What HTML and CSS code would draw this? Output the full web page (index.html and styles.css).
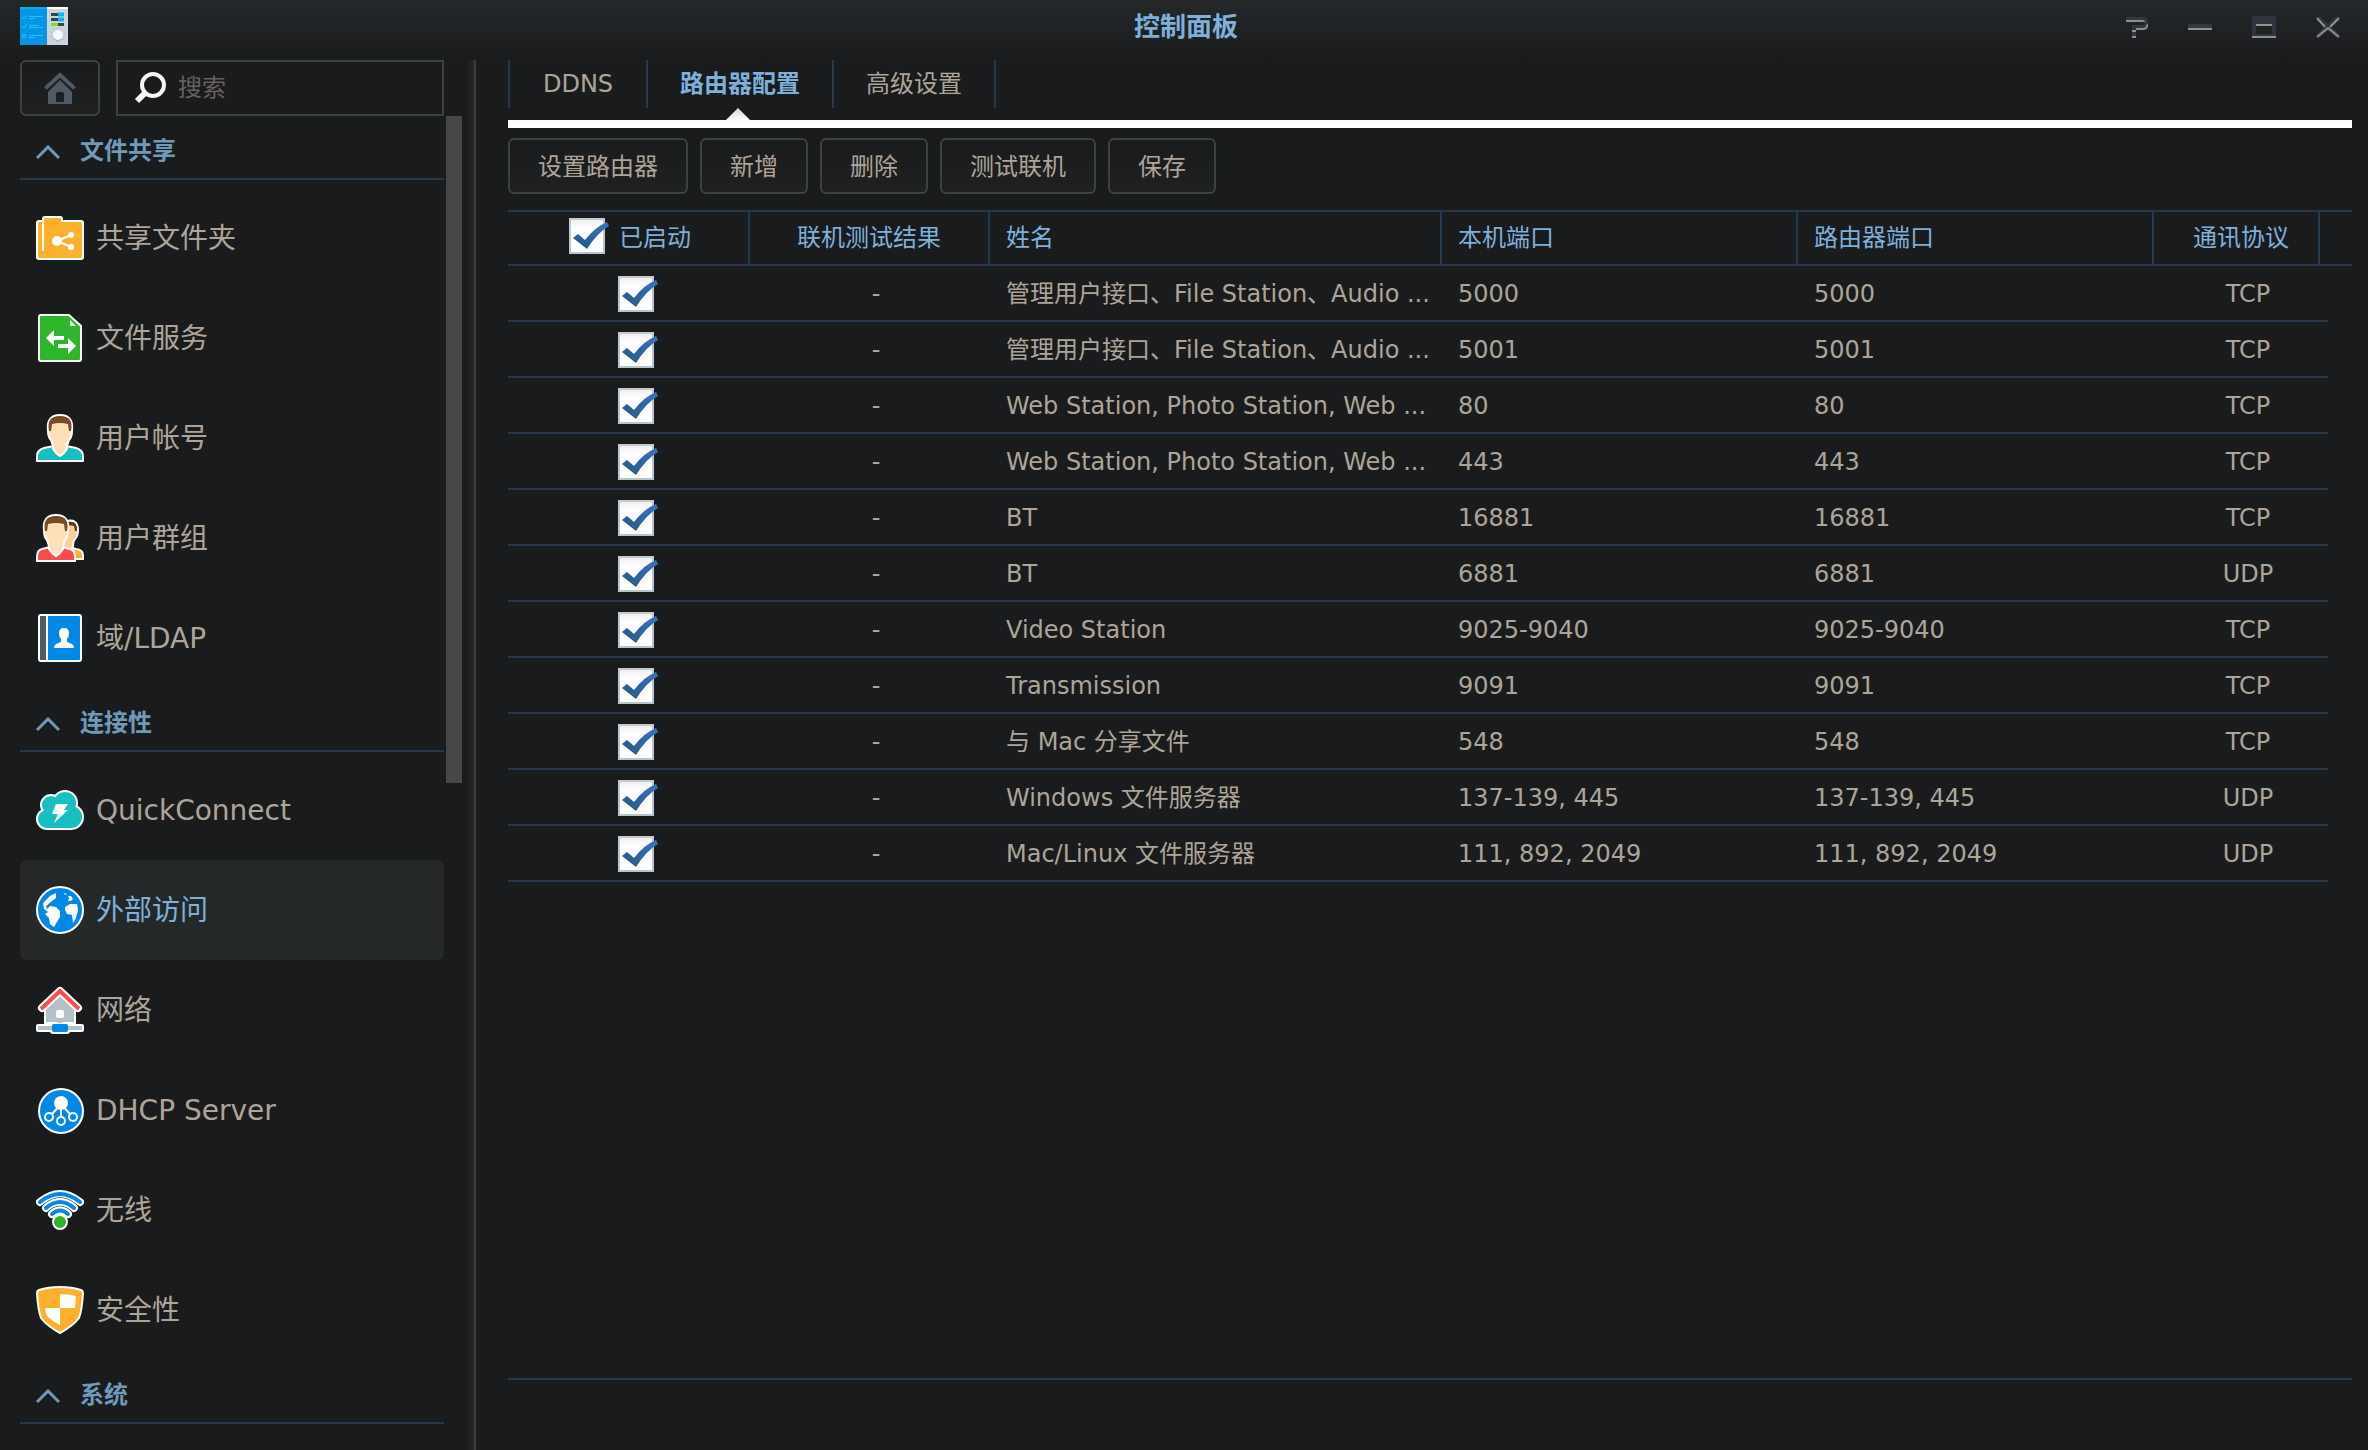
FILE: index.html
```html
<!DOCTYPE html>
<html lang="zh-CN">
<head>
<meta charset="utf-8">
<title>控制面板</title>
<link rel="stylesheet" href="styles.css">
</head>
<body>
<div class="window">
  <header class="titlebar">
    <svg class="app-icon" viewBox="0 0 48 38" aria-hidden="true">
      <path fill="#0795e4" d="M0 0h27v38H0z"/><path fill="#00aef5" d="M0 0h27v2H0z"/>
      <path fill="#ccd5dc" d="M27 0h21v38H27z"/><path fill="#fff" d="M27 0h21v2H27z"/>
      <g fill="none" stroke="#14c8ff"><path d="M2 10l2 2 3-4M2 19l2 2 3-4M2.500 27.500h3v3h-3z"/><path d="M9 9.500h14M9 11.500h6M9 18.500h10M9 20.500h14M9 28.500h14M9 30.500h6"/></g>
      <path stroke="#39434c" stroke-width="3" d="M31 7.500h8M31 12.500h8M38 17.500h6"/>
      <path stroke="#00b9fa" stroke-width="4" d="M38 7.500h6M38 12.500h6"/><path stroke="#7be02b" stroke-width="3" d="M31 17.500h7"/>
      <circle cx="38" cy="28" r="7" fill="none" stroke="#9ba6ae" stroke-dasharray="1 3"/><circle cx="38" cy="29" r="5" fill="#a5b0b8"/><circle cx="38" cy="28" r="5" fill="#f3f9fd"/>
    </svg>
    <h1 class="title">控制面板</h1>
    <div class="controls">
      <button class="control" aria-label="帮助"><svg viewBox="0 0 24 24"><path fill="none" stroke="#33383f" stroke-width="4" d="M2 3h17q3 0 3 4t-3 4h-9v10"/><path fill="none" stroke="#8e9092" stroke-width="2" d="M2 5h16q2 0 2 1M24 8q-1 5-5 5h-7M8 15h4M8 21h4"/></svg></button>
      <button class="control" aria-label="最小化"><svg viewBox="0 0 24 24"><path fill="#33383f" d="M0 8h24v4H0z"/><path fill="#8e9092" d="M0 12h24v2H0z"/></svg></button>
      <button class="control" aria-label="最大化"><svg viewBox="0 0 24 24"><path fill="#30353d" fill-rule="evenodd" d="M0 0h24v20H0zM4 10v8h16v-8z"/><path fill="#8e9092" d="M4 8h16v2H4zM0 20h24v2H0z"/></svg></button>
      <button class="control" aria-label="关闭"><svg viewBox="0 0 24 24"><path stroke="#30353d" stroke-width="5" d="M2 2l20 18M22 2L2 20"/><path fill="none" stroke="#8e9092" stroke-width="2" d="M1 2l8 9M23 2l-9 9M1 21l11-9 11 9"/></svg></button>
    </div>
  </header>

  <div class="body">
    <aside class="sidebar">
      <div class="search-row">
        <button class="home" aria-label="首页"><svg viewBox="0 0 32 32"><path fill="none" stroke="#505a64" stroke-width="4" stroke-linecap="square" d="M3 15L16 3l13 12"/><path fill="#505a64" fill-rule="evenodd" d="M16 8l12 12v12H4V20zM12 30h8v-8q0-2-2-2h-4q-2 0-2 2z"/></svg></button>
        <label class="search">
          <svg viewBox="0 0 32 32" aria-hidden="true"><circle cx="19" cy="13" r="11" fill="none" stroke="#f5f5f5" stroke-width="4"/><path stroke="#f5f5f5" stroke-width="6" d="M11 21l-8 8"/></svg>
          <input type="text" placeholder="搜索" aria-label="搜索">
        </label>
      </div>
      <nav class="nav">
        <div class="nav-list">
          <button class="group"><svg viewBox="0 0 24 14" aria-hidden="true"><path d="M1 13L12 2l11 11"/></svg>文件共享</button>
          <div class="items">
            <a class="item" href="#share"><svg viewBox="0 0 48 48"><path fill="#ffb02e" stroke="#fff" stroke-width="2" d="M1 9q0-2 2-2h4V5q0-2 2-2h15q2 0 2 2v2h19q2 0 2 2v34q0 2-2 2H3q-2 0-2-2z"/><path stroke="#fff" stroke-width="2" d="M7 7v30M21 27l14-6M21 27l14 6"/><g fill="#fff"><circle cx="21" cy="27" r="5"/><circle cx="35" cy="21" r="3"/><circle cx="35" cy="33" r="3"/></g></svg>共享文件夹</a>
            <a class="item" href="#files"><svg viewBox="0 0 48 48"><path fill="#2fb52b" stroke="#fff" stroke-width="2" d="M3 3q0-2 2-2h28l12 11v33q0 2-2 2H5q-2 0-2-2z"/><path fill="#fff" d="M34 6v6h6zM10 24l8-8v6h10v4H18v6zM22 30h10v-6l8 8-8 8v-6H22z"/></svg>文件服务</a>
            <a class="item" href="#user"><svg viewBox="0 0 48 48"><path fill="#15bfc0" stroke="#fff" stroke-width="2" stroke-linejoin="round" d="M1 47v-5q0-6 7-8l10-2h12l10 2q7 2 7 8v5z"/><path fill="#ffdfb8" stroke="#fff" stroke-width="2" d="M12 17q-2-16 12-16t12 16q0 6-3 9-2 4-2 9-3 5-7 7-4-2-7-7 0-5-2-9-3-3-3-9z"/><path fill="#754b28" d="M13 17q-3-15 11-15t11 15h-2l-1-7q-8-2-16 0l-1 7z"/></svg>用户帐号</a>
            <a class="item" href="#group"><svg viewBox="0 0 48 48"><path fill="#ffb02e" stroke="#fff" stroke-width="2" d="M30 45h17v-4q0-5-7-6l-9-2z"/><path fill="#fdcf98" stroke="#fff" stroke-width="2" d="M28 8q14-5 14 8 0 6-3 9-2 2-2 8l-6 4-8-9z"/><path fill="#5d3b1e" d="M31 8q11-2 10 9h-2l-1-5-6-1z"/><path fill="#ff4a4e" stroke="#fff" stroke-width="2" stroke-linejoin="round" d="M1 47v-4q0-7 5-8l8-2h12l8 2q5 1 5 8v4z"/><path fill="#ffdfb8" stroke="#fff" stroke-width="2" d="M8 17Q6 1 20 1t12 16q0 6-3 9-2 4-2 9-3 5-7 7-4-2-7-7 0-5-2-9-3-3-3-9z"/><path fill="#754b28" d="M9 17Q6 2 20 2t11 15h-2l-1-7q-8-2-16 0l-1 7z"/></svg>用户群组</a>
            <a class="item" href="#ldap"><svg viewBox="0 0 48 48"><rect x="3" y="1" width="42" height="46" rx="2" fill="#0088e6" stroke="#fff" stroke-width="2"/><path fill="#505a62" d="M4 2h6v44H4z"/><path fill="#fff" d="M10 2h2v44h-2zM23 19q0-5 5-5t5 5q0 4-2 6v3l5 2q2 1 2 4H18q0-3 2-4l5-2v-3q-2-2-2-6z"/></svg>域/LDAP</a>
          </div>
          <button class="group"><svg viewBox="0 0 24 14" aria-hidden="true"><path d="M1 13L12 2l11 11"/></svg>连接性</button>
          <div class="items">
            <a class="item" href="#quickconnect"><svg viewBox="0 0 48 48"><g fill="#fff"><circle cx="29" cy="17" r="13"/><circle cx="15" cy="19" r="11"/><circle cx="11" cy="33" r="11"/><circle cx="35" cy="31" r="13"/><path d="M11 20h24v24H11z"/></g><g fill="#17bfc0"><circle cx="29" cy="17" r="11"/><circle cx="15" cy="19" r="9"/><circle cx="11" cy="33" r="9"/><circle cx="35" cy="31" r="11"/><path d="M11 18h24v24H11z"/></g><path fill="#fff" d="M20 18h12l-4 6h4L18 37l4-9h-6z"/></svg>QuickConnect</a>
            <a class="item active" href="#external" aria-current="page"><svg viewBox="0 0 48 48"><circle cx="24" cy="24" r="23" fill="#0088e6" stroke="#fff" stroke-width="2"/><path fill="#fff" d="M20 7l-6 3-7 7 1 6 4 3-3 2 4 4 1 6 4 3 3-5 3-5v-6l-4-4-6-1-3 3-1-3 6-5 4-3zM29 21l5-3 7 0 1 6-2 8-3 5-1-8-5-1-2-4zM28 7l3 1-2 1zM32 10h3l2 3-2 2h-3l1-3z"/></svg>外部访问</a>
            <a class="item" href="#network"><svg viewBox="0 0 48 48"><path fill="#b6c0c8" stroke="#fff" stroke-width="2" d="M9 22L24 8l15 14v15H9z"/><path fill="none" stroke="#fff" stroke-width="8" stroke-linejoin="round" stroke-linecap="round" d="M6 22L24 5l18 17"/><path fill="none" stroke="#ff4a4e" stroke-width="4" d="M5 23L24 5l19 18"/><rect x="20" y="24" width="8" height="8" rx="2" fill="#fff"/><path fill="#b6c0c8" d="M22 36h4v3h-4z"/><rect y="38" width="48" height="8" rx="2" fill="#fff"/><rect x="14" y="37" width="20" height="11" rx="3" fill="#fff"/><path fill="#b6c0c8" d="M2 40h44v4H2z"/><rect x="16" y="38" width="16" height="8" rx="2" fill="#0088e6"/></svg>网络</a>
            <a class="item" href="#dhcp"><svg viewBox="0 0 48 48"><circle cx="25" cy="25" r="22" fill="#0088e6" stroke="#fff" stroke-width="2"/><path stroke="#fff" stroke-width="2" d="M25 17v14M25 18l-9 10M25 18l9 10"/><circle cx="25" cy="17" r="7" fill="#fff"/><g fill="#0088e6" stroke="#fff" stroke-width="2"><circle cx="13" cy="31" r="4"/><circle cx="25" cy="35" r="4"/><circle cx="37" cy="31" r="4"/></g></svg>DHCP Server</a>
            <a class="item" href="#wireless"><svg viewBox="0 0 48 48"><g fill="none" stroke-linecap="round"><path stroke="#fff" stroke-width="8" d="M4 16q20-16 40 0"/><path stroke="#0088e6" stroke-width="4" d="M4 16q20-16 40 0"/><path stroke="#1a1b1d" stroke-width="9" d="M10 22q14-12 28 0"/><path stroke="#fff" stroke-width="8" d="M10 22q14-12 28 0"/><path stroke="#0088e6" stroke-width="4" d="M10 22q14-12 28 0"/><path stroke="#1a1b1d" stroke-width="9" d="M16 28q8-7 16 0"/><path stroke="#fff" stroke-width="8" d="M16 28q8-7 16 0"/><path stroke="#0088e6" stroke-width="4" d="M16 28q8-7 16 0"/></g><circle cx="24" cy="36" r="7" fill="#2fb52b" stroke="#fff" stroke-width="2"/></svg>无线</a>
            <a class="item" href="#security"><svg viewBox="0 0 48 48"><path fill="#ffb02e" stroke="#fff" stroke-width="2" stroke-linejoin="round" d="M24 1q12 0 21 3 2 1 2 3-1 17-4 25-6 8-19 15Q11 40 5 32 2 24 1 7q0-2 2-3 9-3 21-3z"/><path fill="#fff" d="M24 8q8 0 16 2l-1 12H24zM9 22h15v17Q11 32 10 28z"/></svg>安全性</a>
          </div>
          <button class="group"><svg viewBox="0 0 24 14" aria-hidden="true"><path d="M1 13L12 2l11 11"/></svg>系统</button>
        </div>
        <div class="scroll-thumb"></div>
      </nav>
    </aside>

    <main class="content">
      <div class="tabs" role="tablist">
        <button class="tab" role="tab">DDNS</button>
        <button class="tab selected" role="tab" aria-selected="true">路由器配置</button>
        <button class="tab" role="tab">高级设置</button>
      </div>
      <div class="toolbar">
        <button class="btn">设置路由器</button>
        <button class="btn">新增</button>
        <button class="btn">删除</button>
        <button class="btn">测试联机</button>
        <button class="btn">保存</button>
      </div>
      <div class="grid">
        <table class="ports">
          <colgroup><col class="c-on"><col class="c-result"><col class="c-name"><col><col><col class="c-proto"><col class="c-rest"></colgroup>
          <thead>
            <tr><th class="mid"><label class="check-all"><input class="check" type="checkbox" checked>已启动</label></th><th class="mid">联机测试结果</th><th>姓名</th><th>本机端口</th><th>路由器端口</th><th class="proto">通讯协议</th><td></td></tr>
          </thead>
          <tbody>
            <tr><td class="on"><input class="check" type="checkbox" aria-label="启用" checked></td><td class="mid">-</td><td>管理用户接口、File Station、Audio ...</td><td>5000</td><td>5000</td><td class="proto">TCP</td><td></td></tr>
            <tr><td class="on"><input class="check" type="checkbox" aria-label="启用" checked></td><td class="mid">-</td><td>管理用户接口、File Station、Audio ...</td><td>5001</td><td>5001</td><td class="proto">TCP</td><td></td></tr>
            <tr><td class="on"><input class="check" type="checkbox" aria-label="启用" checked></td><td class="mid">-</td><td>Web Station, Photo Station, Web ...</td><td>80</td><td>80</td><td class="proto">TCP</td><td></td></tr>
            <tr><td class="on"><input class="check" type="checkbox" aria-label="启用" checked></td><td class="mid">-</td><td>Web Station, Photo Station, Web ...</td><td>443</td><td>443</td><td class="proto">TCP</td><td></td></tr>
            <tr><td class="on"><input class="check" type="checkbox" aria-label="启用" checked></td><td class="mid">-</td><td>BT</td><td>16881</td><td>16881</td><td class="proto">TCP</td><td></td></tr>
            <tr><td class="on"><input class="check" type="checkbox" aria-label="启用" checked></td><td class="mid">-</td><td>BT</td><td>6881</td><td>6881</td><td class="proto">UDP</td><td></td></tr>
            <tr><td class="on"><input class="check" type="checkbox" aria-label="启用" checked></td><td class="mid">-</td><td>Video Station</td><td>9025-9040</td><td>9025-9040</td><td class="proto">TCP</td><td></td></tr>
            <tr><td class="on"><input class="check" type="checkbox" aria-label="启用" checked></td><td class="mid">-</td><td>Transmission</td><td>9091</td><td>9091</td><td class="proto">TCP</td><td></td></tr>
            <tr><td class="on"><input class="check" type="checkbox" aria-label="启用" checked></td><td class="mid">-</td><td>与 Mac 分享文件</td><td>548</td><td>548</td><td class="proto">TCP</td><td></td></tr>
            <tr><td class="on"><input class="check" type="checkbox" aria-label="启用" checked></td><td class="mid">-</td><td>Windows 文件服务器</td><td>137-139, 445</td><td>137-139, 445</td><td class="proto">UDP</td><td></td></tr>
            <tr><td class="on"><input class="check" type="checkbox" aria-label="启用" checked></td><td class="mid">-</td><td>Mac/Linux 文件服务器</td><td>111, 892, 2049</td><td>111, 892, 2049</td><td class="proto">UDP</td><td></td></tr>
          </tbody>
        </table>
      </div>
    </main>
  </div>
</div>
</body>
</html>
```
FILE: styles.css
```css
:root {
  --bg: #1a1b1d;
  --text: #aea599;
  --accent: #7fb0dc;
  --heading: #6f9ab9;
  --line: #26384a;
  --column: #1f3a52;
  --border: #3b4242;
}

* { box-sizing: border-box; }

body {
  margin: 0;
  background: var(--bg);
  color: var(--text);
  font: 24px/32px "DejaVu Sans", "Noto Sans CJK SC", sans-serif;
}

button, input { font: inherit; color: inherit; }
button { margin: 0; padding: 0; border: 0; background: none; }
svg { display: block; flex: none; }

.window {
  display: flex;
  flex-direction: column;
  height: 100vh;
  overflow: hidden;
  background: linear-gradient(#242829, var(--bg) 60px);
}

/* Title bar */
.titlebar {
  display: grid;
  grid-template-columns: 1fr auto 1fr;
  align-items: center;
  height: 60px;
  padding: 0 28px 8px 20px;
  flex: none;
}
.app-icon { width: 48px; height: 38px; }
.title { margin: 0; padding: 2px 0 0 12px; color: var(--accent); font-size: 26px; line-height: 32px; font-weight: bold; }
.controls { display: flex; justify-content: flex-end; gap: 40px; padding-top: 4px; }
.control svg { width: 24px; height: 24px; }

.body { display: flex; flex: 1; min-height: 0; }

/* Sidebar */
.sidebar {
  display: flex;
  flex-direction: column;
  flex: none;
  width: 476px;
  padding-left: 20px;
  border-right: 2px solid #3c3c3c;
  background: linear-gradient(to left, #262828, transparent 8px);
}
.search-row { display: flex; gap: 16px; flex: none; padding-right: 30px; }
.home {
  display: grid;
  place-items: center;
  width: 80px;
  height: 56px;
  border: 2px solid var(--border);
  border-radius: 6px;
  background: linear-gradient(#1a1b1d, #1f2021);
}
.home svg, .search svg { width: 32px; height: 32px; }
.search {
  display: flex;
  flex: 1;
  align-items: center;
  gap: 12px;
  min-width: 0;
  padding: 0 16px;
  border: 2px solid var(--border);
}
.search input { flex: 1; min-width: 0; padding: 0; border: 0; outline: 0; background: none; }
.search input::placeholder { color: #66615c; opacity: 1; }

.nav { display: flex; flex: 1; gap: 2px; min-height: 0; }
.nav-list { width: 424px; overflow: hidden; }
.scroll-thumb { width: 16px; height: 50%; background: #464749; }
.group {
  display: flex;
  align-items: center;
  gap: 20px;
  width: 100%;
  height: 64px;
  padding: 8px 16px 0;
  border-bottom: 2px solid var(--line);
  color: var(--heading);
  font-weight: bold;
}
.group svg { width: 24px; height: 14px; margin-top: 2px; fill: none; stroke: currentColor; stroke-width: 3; }
.items { padding-top: 8px; }
.item {
  display: flex;
  align-items: center;
  gap: 12px;
  height: 100px;
  padding: 2px 16px 0;
  border-radius: 6px;
  color: var(--text);
  font-size: 28px;
  line-height: 40px;
  text-decoration: none;
}
.item svg { width: 48px; height: 48px; margin-bottom: 2px; }
.item.active { background: #252829; color: var(--accent); }

/* Content */
.content { display: flex; flex-direction: column; flex: 1; min-width: 0; padding: 0 16px 70px 32px; }
.tabs {
  display: flex;
  flex: none;
  height: 68px;
  border-bottom: 8px solid #fff;
  background: none;
  border-image: linear-gradient(#d6d4d4, #fff) 8 / 0 0 8px;
}
.tabs::before { content: ""; width: 2px; height: 48px; background: var(--line); }
.tab { position: relative; min-width: 138px; height: 48px; padding: 0 32px; border-right: 2px solid var(--line); }
.tab.selected { color: var(--accent); font-weight: bold; }
.tab.selected::after {
  content: "";
  position: absolute;
  left: 50%;
  top: 48px;
  width: 24px;
  height: 12px;
  margin-left: -14px;
  background: linear-gradient(#d6d4d4, #fff);
  clip-path: polygon(50% 0, 100% 100%, 0 100%);
}

.toolbar { display: flex; flex: none; gap: 12px; padding: 10px 0 16px; }
.btn {
  height: 56px;
  padding: 2px 28px 0;
  border: 2px solid var(--border);
  border-radius: 6px;
  background: linear-gradient(#1a1b1d, #1f2021);
}

.grid { flex: 1; min-height: 0; border-bottom: 2px solid var(--line); }
.ports { width: 100%; table-layout: fixed; border-spacing: 0; }
.c-on { width: 242px; }
.c-result { width: 240px; }
.c-name { width: 452px; }
.c-proto { width: 166px; }
.c-rest { width: 32px; }
.ports th, .ports td { height: 56px; padding: 0 0 0 16px; text-align: left; white-space: nowrap; overflow: hidden; }
.ports thead th, .ports thead td {
  border: solid var(--line);
  border-width: 2px 0;
  color: var(--accent);
  font-weight: normal;
}
.ports thead th { border-right: 2px solid var(--column); }
.ports tbody tr { background: linear-gradient(var(--line), var(--line)) left bottom / calc(100% - 24px) 2px no-repeat; }
.ports .mid { text-align: center; }
.ports td.mid { padding-left: 12px; }
.ports th.mid { padding-left: 0; }
.ports th.proto { padding-right: 6px; text-align: center; }
.ports td.proto { padding-right: 0; padding-left: 22px; text-align: center; }
.ports td.on { padding-left: 18px; text-align: center; }

.check-all { display: flex; align-items: center; justify-content: center; gap: 10px; padding-left: 4px; }
.check-all .check { margin-bottom: 4px; }
.check {
  appearance: none;
  display: inline-block;
  vertical-align: middle;
  width: 40px;
  height: 36px;
  margin: 0;
  flex: none;
  background: linear-gradient(#eee, #fff 8px) 2px 2px / 32px 32px no-repeat, linear-gradient(#c2cad1, #b8c4cd) left / 36px 36px no-repeat;
}
.check:checked {
  background: url("data:image/svg+xml,%3Csvg xmlns='http://www.w3.org/2000/svg' viewBox='0 0 40 36'%3E%3ClinearGradient id='g' x1='0' y1='1' x2='1' y2='0'%3E%3Cstop stop-color='%23255683'/%3E%3Cstop offset='1' stop-color='%233876bd'/%3E%3C/linearGradient%3E%3Cpath fill='url(%23g)' d='M4 20l5-4 7 6Q26 9 38 4l2 4Q28 15 18 31z'/%3E%3C/svg%3E") no-repeat, linear-gradient(#eee, #fff 8px) 2px 2px / 32px 32px no-repeat, linear-gradient(#c2cad1, #b8c4cd) left / 36px 36px no-repeat;
}
```
